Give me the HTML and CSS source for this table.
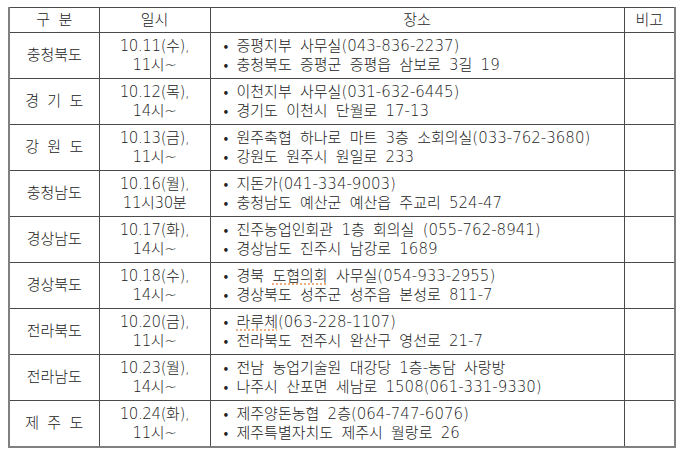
FILE: index.html
```html
<!DOCTYPE html>
<html lang="ko">
<head>
<meta charset="utf-8">
<link rel="stylesheet" href="styles.css">
</head>
<body>
<table class="sched">
  <colgroup>
    <col class="c-region">
    <col class="c-date">
    <col class="c-place">
    <col class="c-note">
  </colgroup>
  <thead>
    <tr><th>구 분</th><th>일시</th><th>장소</th><th>비고</th></tr>
  </thead>
  <tbody>
    <tr><td class="region">충청북도</td><td class="date">10.11(수),<br>11시~</td><td class="place">• 증평지부 사무실(043-836-2237)<br>• 충청북도 증평군 증평읍 삼보로 3길 19</td><td></td></tr>
    <tr><td class="region">경 기 도</td><td class="date">10.12(목),<br>14시~</td><td class="place">• 이천지부 사무실(031-632-6445)<br>• 경기도 이천시 단월로 17-13</td><td></td></tr>
    <tr><td class="region">강 원 도</td><td class="date">10.13(금),<br>11시~</td><td class="place">• 원주축협 하나로 마트 3층 소회의실(033-762-3680)<br>• 강원도 원주시 원일로 233</td><td></td></tr>
    <tr><td class="region">충청남도</td><td class="date">10.16(월),<br>11시30분</td><td class="place">• 지돈가(041-334-9003)<br>• 충청남도 예산군 예산읍 주교리 524-47</td><td></td></tr>
    <tr><td class="region">경상남도</td><td class="date">10.17(화),<br>14시~</td><td class="place">• 진주농업인회관 1층 회의실 (055-762-8941)<br>• 경상남도 진주시 남강로 1689</td><td></td></tr>
    <tr><td class="region">경상북도</td><td class="date">10.18(수),<br>14시~</td><td class="place">• 경북 <span class="spell">도협의회</span> 사무실(054-933-2955)<br>• 경상북도 성주군 성주읍 본성로 811-7</td><td></td></tr>
    <tr><td class="region">전라북도</td><td class="date">10.20(금),<br>11시~</td><td class="place">• <span class="spell">라루체</span>(063-228-1107)<br>• 전라북도 전주시 완산구 영선로 21-7</td><td></td></tr>
    <tr><td class="region">전라남도</td><td class="date">10.23(월),<br>14시~</td><td class="place">• 전남 농업기술원 대강당 1층-농담 사랑방<br>• 나주시 산포면 세남로 1508(061-331-9330)</td><td></td></tr>
    <tr><td class="region">제 주 도</td><td class="date">10.24(화),<br>11시~</td><td class="place">• 제주양돈농협 2층(064-747-6076)<br>• 제주특별자치도 제주시 월랑로 26</td><td></td></tr>
  </tbody>
</table>
</body>
</html>
```

FILE: styles.css
```css
html, body {
  margin: 0;
  padding: 0;
  background: #ffffff;
}
body {
  padding: 7px 0 0 8px;
  font-family: "DejaVu Sans", "Noto Sans CJK KR", sans-serif;
  color: #222222;
  font-size: 15px;
  font-weight: 300;
  word-spacing: 3.5px;
}
.sched {
  border-collapse: collapse;
  table-layout: fixed;
  width: 666px;
  border: 2px solid #808080;
  border-top: 1px solid #707070;
}
.c-region { width: 90px; }
.c-date { width: 111px; }
.c-place { width: 414px; }
.c-note { width: 51px; }
.sched th, .sched td {
  border: 1px solid #4a4a4a;
  padding: 0;
  font-weight: 300;
  line-height: 19px;
}
.sched th {
  height: 24px;
  text-align: center;
}
.sched td {
  height: 45px;
}
.region, .date {
  text-align: center;
}
.date {
  word-spacing: 0;
  letter-spacing: -0.4px;
}
.place {
  text-align: left;
  padding-left: 13px !important;
  white-space: nowrap;
}
.spell {
  text-decoration: underline dotted #e8955a;
  text-underline-offset: 3px;
}
```
